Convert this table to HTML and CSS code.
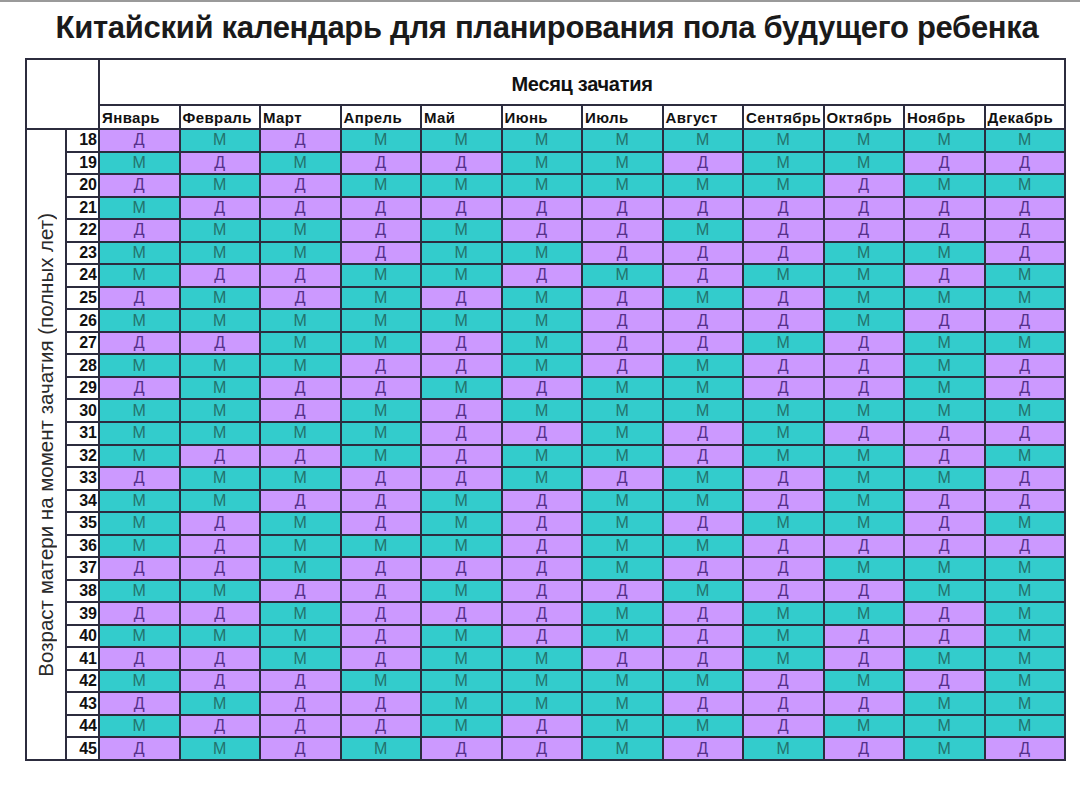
FILE: index.html
```html
<!DOCTYPE html>
<html lang="ru">
<head>
<meta charset="utf-8">
<title>Китайский календарь</title>
<link rel="stylesheet" href="styles.css">
</head>
<body>
<div class="topline"></div>
<h1 class="title">Китайский календарь для планирования пола будущего ребенка</h1>
<div class="chart">
<div class="corner"></div>
<div class="month-title">Месяц зачатия</div>
<div class="mh">Январь</div><div class="mh">Февраль</div><div class="mh">Март</div><div class="mh">Апрель</div><div class="mh">Май</div><div class="mh">Июнь</div><div class="mh">Июль</div><div class="mh">Август</div><div class="mh">Сентябрь</div><div class="mh">Октябрь</div><div class="mh">Ноябрь</div><div class="mh">Декабрь</div>
<div class="age-label"><span>Возраст матери на момент зачатия (полных лет)</span></div>
<div class="n">18</div><div class="d">Д</div><div class="m">М</div><div class="d">Д</div><div class="m">М</div><div class="m">М</div><div class="m">М</div><div class="m">М</div><div class="m">М</div><div class="m">М</div><div class="m">М</div><div class="m">М</div><div class="m">М</div>
<div class="n">19</div><div class="m">М</div><div class="d">Д</div><div class="m">М</div><div class="d">Д</div><div class="d">Д</div><div class="m">М</div><div class="m">М</div><div class="d">Д</div><div class="m">М</div><div class="m">М</div><div class="d">Д</div><div class="d">Д</div>
<div class="n">20</div><div class="d">Д</div><div class="m">М</div><div class="d">Д</div><div class="m">М</div><div class="m">М</div><div class="m">М</div><div class="m">М</div><div class="m">М</div><div class="m">М</div><div class="d">Д</div><div class="m">М</div><div class="m">М</div>
<div class="n">21</div><div class="m">М</div><div class="d">Д</div><div class="d">Д</div><div class="d">Д</div><div class="d">Д</div><div class="d">Д</div><div class="d">Д</div><div class="d">Д</div><div class="d">Д</div><div class="d">Д</div><div class="d">Д</div><div class="d">Д</div>
<div class="n">22</div><div class="d">Д</div><div class="m">М</div><div class="m">М</div><div class="d">Д</div><div class="m">М</div><div class="d">Д</div><div class="d">Д</div><div class="m">М</div><div class="d">Д</div><div class="d">Д</div><div class="d">Д</div><div class="d">Д</div>
<div class="n">23</div><div class="m">М</div><div class="m">М</div><div class="m">М</div><div class="d">Д</div><div class="m">М</div><div class="m">М</div><div class="d">Д</div><div class="d">Д</div><div class="d">Д</div><div class="m">М</div><div class="m">М</div><div class="d">Д</div>
<div class="n">24</div><div class="m">М</div><div class="d">Д</div><div class="d">Д</div><div class="m">М</div><div class="m">М</div><div class="d">Д</div><div class="m">М</div><div class="d">Д</div><div class="m">М</div><div class="m">М</div><div class="d">Д</div><div class="m">М</div>
<div class="n">25</div><div class="d">Д</div><div class="m">М</div><div class="d">Д</div><div class="m">М</div><div class="d">Д</div><div class="m">М</div><div class="d">Д</div><div class="m">М</div><div class="d">Д</div><div class="m">М</div><div class="m">М</div><div class="m">М</div>
<div class="n">26</div><div class="m">М</div><div class="m">М</div><div class="m">М</div><div class="m">М</div><div class="m">М</div><div class="m">М</div><div class="d">Д</div><div class="d">Д</div><div class="d">Д</div><div class="m">М</div><div class="d">Д</div><div class="d">Д</div>
<div class="n">27</div><div class="d">Д</div><div class="d">Д</div><div class="m">М</div><div class="m">М</div><div class="d">Д</div><div class="m">М</div><div class="d">Д</div><div class="d">Д</div><div class="m">М</div><div class="d">Д</div><div class="m">М</div><div class="m">М</div>
<div class="n">28</div><div class="m">М</div><div class="m">М</div><div class="m">М</div><div class="d">Д</div><div class="d">Д</div><div class="m">М</div><div class="d">Д</div><div class="m">М</div><div class="d">Д</div><div class="d">Д</div><div class="m">М</div><div class="d">Д</div>
<div class="n">29</div><div class="d">Д</div><div class="m">М</div><div class="d">Д</div><div class="d">Д</div><div class="m">М</div><div class="d">Д</div><div class="m">М</div><div class="m">М</div><div class="d">Д</div><div class="d">Д</div><div class="m">М</div><div class="d">Д</div>
<div class="n">30</div><div class="m">М</div><div class="m">М</div><div class="d">Д</div><div class="m">М</div><div class="d">Д</div><div class="m">М</div><div class="m">М</div><div class="m">М</div><div class="m">М</div><div class="m">М</div><div class="m">М</div><div class="m">М</div>
<div class="n">31</div><div class="m">М</div><div class="m">М</div><div class="m">М</div><div class="m">М</div><div class="d">Д</div><div class="d">Д</div><div class="m">М</div><div class="d">Д</div><div class="m">М</div><div class="d">Д</div><div class="d">Д</div><div class="d">Д</div>
<div class="n">32</div><div class="m">М</div><div class="d">Д</div><div class="d">Д</div><div class="m">М</div><div class="d">Д</div><div class="m">М</div><div class="m">М</div><div class="d">Д</div><div class="m">М</div><div class="m">М</div><div class="d">Д</div><div class="m">М</div>
<div class="n">33</div><div class="d">Д</div><div class="m">М</div><div class="m">М</div><div class="d">Д</div><div class="d">Д</div><div class="m">М</div><div class="d">Д</div><div class="m">М</div><div class="d">Д</div><div class="m">М</div><div class="m">М</div><div class="d">Д</div>
<div class="n">34</div><div class="m">М</div><div class="m">М</div><div class="d">Д</div><div class="d">Д</div><div class="m">М</div><div class="d">Д</div><div class="m">М</div><div class="m">М</div><div class="d">Д</div><div class="m">М</div><div class="d">Д</div><div class="d">Д</div>
<div class="n">35</div><div class="m">М</div><div class="d">Д</div><div class="m">М</div><div class="d">Д</div><div class="m">М</div><div class="d">Д</div><div class="m">М</div><div class="d">Д</div><div class="m">М</div><div class="m">М</div><div class="d">Д</div><div class="m">М</div>
<div class="n">36</div><div class="m">М</div><div class="d">Д</div><div class="m">М</div><div class="m">М</div><div class="m">М</div><div class="d">Д</div><div class="m">М</div><div class="m">М</div><div class="d">Д</div><div class="d">Д</div><div class="d">Д</div><div class="d">Д</div>
<div class="n">37</div><div class="d">Д</div><div class="d">Д</div><div class="m">М</div><div class="d">Д</div><div class="d">Д</div><div class="d">Д</div><div class="m">М</div><div class="d">Д</div><div class="d">Д</div><div class="m">М</div><div class="m">М</div><div class="m">М</div>
<div class="n">38</div><div class="m">М</div><div class="m">М</div><div class="d">Д</div><div class="d">Д</div><div class="m">М</div><div class="d">Д</div><div class="d">Д</div><div class="m">М</div><div class="d">Д</div><div class="d">Д</div><div class="m">М</div><div class="m">М</div>
<div class="n">39</div><div class="d">Д</div><div class="d">Д</div><div class="m">М</div><div class="d">Д</div><div class="d">Д</div><div class="d">Д</div><div class="m">М</div><div class="d">Д</div><div class="m">М</div><div class="m">М</div><div class="d">Д</div><div class="m">М</div>
<div class="n">40</div><div class="m">М</div><div class="m">М</div><div class="m">М</div><div class="d">Д</div><div class="m">М</div><div class="d">Д</div><div class="m">М</div><div class="d">Д</div><div class="m">М</div><div class="d">Д</div><div class="d">Д</div><div class="m">М</div>
<div class="n">41</div><div class="d">Д</div><div class="d">Д</div><div class="m">М</div><div class="d">Д</div><div class="m">М</div><div class="m">М</div><div class="d">Д</div><div class="d">Д</div><div class="m">М</div><div class="d">Д</div><div class="m">М</div><div class="m">М</div>
<div class="n">42</div><div class="m">М</div><div class="d">Д</div><div class="d">Д</div><div class="m">М</div><div class="m">М</div><div class="m">М</div><div class="m">М</div><div class="m">М</div><div class="d">Д</div><div class="m">М</div><div class="d">Д</div><div class="m">М</div>
<div class="n">43</div><div class="d">Д</div><div class="m">М</div><div class="d">Д</div><div class="d">Д</div><div class="m">М</div><div class="m">М</div><div class="m">М</div><div class="d">Д</div><div class="d">Д</div><div class="d">Д</div><div class="m">М</div><div class="m">М</div>
<div class="n">44</div><div class="m">М</div><div class="d">Д</div><div class="d">Д</div><div class="d">Д</div><div class="m">М</div><div class="d">Д</div><div class="m">М</div><div class="m">М</div><div class="d">Д</div><div class="m">М</div><div class="m">М</div><div class="m">М</div>
<div class="n">45</div><div class="d">Д</div><div class="m">М</div><div class="d">Д</div><div class="m">М</div><div class="d">Д</div><div class="d">Д</div><div class="m">М</div><div class="d">Д</div><div class="m">М</div><div class="d">Д</div><div class="m">М</div><div class="d">Д</div>
</div>
</body>
</html>
```

FILE: styles.css
```css
html, body {
  margin: 0;
  padding: 0;
  background: #ffffff;
}
body {
  width: 1080px;
  height: 787px;
  overflow: hidden;
  font-family: "Liberation Sans", Arial, sans-serif;
}
.topline {
  height: 2px;
  background: #9a9a9a;
}
.title {
  margin: 8px 0 0 0;
  padding-left: 14px;
  height: 36px;
  font-size: 31px;
  line-height: 36px;
  font-weight: bold;
  text-align: center;
  color: #1a1a1a;
  letter-spacing: -0.3px;
}
.chart {
  margin: 12px 0 0 25px;
  width: 1041px;
  height: 703px;
  box-sizing: border-box;
  padding: 2px;
  display: grid;
  gap: 2px;
  grid-template-columns: 38px 31px repeat(12, 1fr);
  grid-template-rows: 44px 22px repeat(28, 1fr);
  background: #2c2c3e;
}
.corner {
  grid-column: 1 / span 2;
  grid-row: 1 / span 2;
  background: #fff;
}
.month-title {
  grid-column: 3 / span 12;
  background: #fff;
  display: flex;
  align-items: center;
  justify-content: center;
  font-size: 20px;
  font-weight: bold;
  color: #111;
  padding-top: 4px;
  letter-spacing: -0.3px;
}
.mh {
  background: #fff;
  font-size: 15px;
  font-weight: bold;
  color: #111;
  display: flex;
  align-items: center;
  padding-left: 2px;
  white-space: nowrap;
  overflow: visible;
  letter-spacing: 0.4px;
}
.age-label {
  grid-column: 1;
  grid-row: 3 / span 28;
  background: #fff;
  display: flex;
  align-items: center;
  justify-content: center;
}
.age-label span {
  writing-mode: vertical-rl;
  transform: rotate(180deg);
  font-size: 20.5px;
  color: #2a2a2a;
  white-space: nowrap;
}
.n {
  background: #fff;
  font-size: 16px;
  font-weight: bold;
  color: #111;
  padding-right: 1px;
  display: flex;
  align-items: center;
  justify-content: flex-end;
}
.d, .m {
  display: flex;
  align-items: center;
  justify-content: center;
  font-size: 16px;
}
.d {
  background: #cc99ff;
  color: #55308a;
}
.m {
  background: #33cccc;
  color: #23736c;
}
```
